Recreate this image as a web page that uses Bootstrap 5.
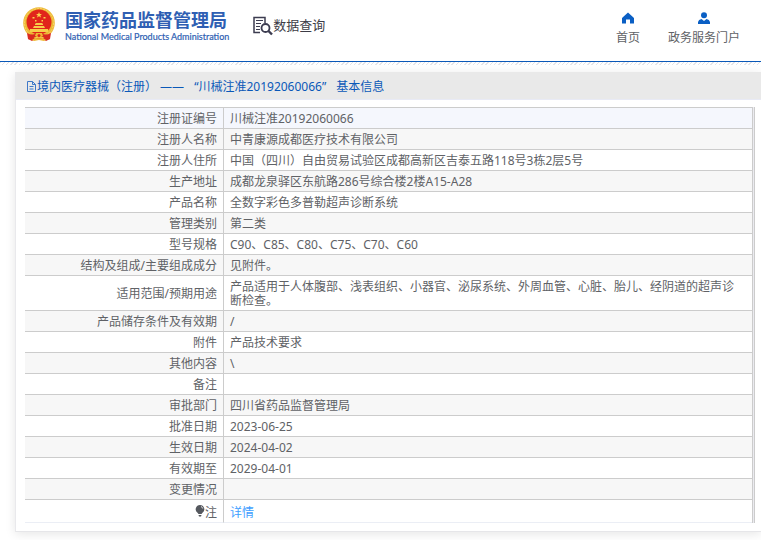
<!DOCTYPE html>
<html lang="zh-CN">
<head>
<meta charset="utf-8">
<meta name="viewport" content="width=device-width, initial-scale=1">
<title>国家药品监督管理局 数据查询</title>
<link href="https://cdn.jsdelivr.net/npm/bootstrap@5.3.0/dist/css/bootstrap.min.css" rel="stylesheet">
<style>
body{font-family:"Noto Sans","Noto Sans CJK SC",sans-serif;font-size:12px;line-height:14px;color:#606266;background:#fff}
a{text-decoration:none}
.site-head{height:61px;padding:7px 21px 0 23px}
.head-rule{height:4px;border-top:1px solid #0a58b8;background:repeating-linear-gradient(135deg,#e4e4e8 0 1px,#fff 1px 3px)}
.brand-name{font-size:18px;line-height:22px;font-weight:700;color:#2f5fb3}
.brand-en{font-family:Lato,"Liberation Sans",sans-serif;font-size:9px;line-height:12px;color:#2f5fb3;-webkit-text-stroke:.2px #2f5fb3}
.brand-text{margin-left:10px;padding-top:2px}
.query{margin:9px 0 0 24px;color:#3c3c46}
.query span{font-size:13px;line-height:18px}
.top-links{gap:28px;padding-top:5px}
.top-links a{color:#606266}
.top-links svg{margin-bottom:7px}
.info-panel{margin:7px 0 9px 15px;border-left:1px solid #e9e9ec;border-bottom:1px solid #e6e6e9;box-shadow:0 2px 10px rgba(0,0,0,.1)}
.info-title{height:28px;margin:0;padding:2px 0 0 10px;font-size:12px;line-height:26px;font-weight:400;color:#0a58b8;background:#e9e9e9;border-bottom:1px solid #e8eaf5}
.info-title span+span{margin-left:10px}
.table-frame{margin:7px 6px 8px 9px;background:#ebebf0;border-right:1px solid #ccc;padding-right:1px}
.info-table{width:100%;border-collapse:separate;border-spacing:0;border-top:1px solid #ccc;border-right:1px solid #ccc;background:#fff}
.info-table th,.info-table td{padding:4px 6px 2px;border-bottom:1px solid #ccc;vertical-align:middle}
.info-table th{width:199px;text-align:right;font-weight:400;border-right:1px solid #ccc}
.info-table tr:nth-child(even){background:#f7f7f7}
.info-table tr:first-child{background:#f5f7fd}
.info-table td{height:21px;padding-right:16px}
.info-table tr:last-child th,.info-table tr:last-child td{padding-top:5px;border-bottom-color:#ebeef5}
.info-table a{color:#409eff}
</style>
<script src="https://cdn.jsdelivr.net/npm/bootstrap@5.3.0/dist/js/bootstrap.bundle.min.js"></script>
</head>
<body>
<header>
<div class="site-head d-flex align-items-start">
<svg width="32" height="35" viewBox="0 0 32 35" aria-hidden="true">
<path d="M6 25 5 32l4 2 3-2 4 1 4-1 3 2 4-2-1-7Z" fill="#d92a20"/>
<circle cx="16" cy="16" r="15.8" fill="#edb936"/>
<circle cx="16" cy="16" r="14.5" fill="none" stroke="#f7d568" stroke-width="1" stroke-dasharray="2 1"/>
<circle cx="16" cy="15" r="12.500" fill="#e1251b"/>
<path d="m16 5 .8 2H19l-1.700 1.300.7 2.200-2-1.300-2 1.300.7-2.200L13 7h2.200Z" fill="#fbd34b"/>
<path d="M9.500 10h2v1.500h-2zM12 13h1.500v1.500H12zM18.500 13H20v1.500h-1.500zM20.500 10h2v1.500h-2z" fill="#fbd34b"/>
<path d="m12 17 1-1h6l1 1v1h-8Zm-1 2h10l1 2H10ZM7 22h18v3H7Z" fill="#f6cf4a"/>
<path d="M4 26q6 3 9 0h6q3 3 9 0l-1 6q-4 1-7-2h-8q-3 3-7 2Z" fill="#d92a20"/>
<path d="M13 26h6l1 3-4 2-4-2ZM9 33l3-2 4 1 4-1 3 2-2 1-5-1-5 1Z" fill="#efb832"/>
<circle cx="16" cy="28.500" r="1.500" fill="#e1251b"/>
</svg>
<div class="brand-text d-flex flex-column text-nowrap">
<span class="brand-name">国家药品监督管理局</span>
<span class="brand-en">National Medical Products Administration</span>
</div>
<div class="query d-flex text-nowrap">
<svg width="20" height="20" viewBox="0 0 20 20" fill="none" stroke="#3c3c50" aria-hidden="true">
<path d="M7 16.500H1V1.500h11V7" stroke-width="1.500"/>
<path d="M3 4.500h7M3 7.500h5M3 10.500h4M3 13.500h4" stroke-width="1"/>
<circle cx="12.500" cy="12" r="4" stroke-width="1.800"/>
<path d="m15.500 15 3.500 3.500" stroke-width="2.400"/>
</svg>
<span>数据查询</span>
</div>
<nav class="top-links d-flex ms-auto text-center text-nowrap">
<a href="#" class="d-flex flex-column align-items-center"><svg width="12" height="12" viewBox="0 0 12 12" aria-hidden="true"><path d="M6 .500 0 6v5.500h4V7.500h4v4h4V6Z" fill="#0a5fc4"/></svg>首页</a>
<a href="#" class="d-flex flex-column align-items-center"><svg width="12" height="12" viewBox="0 0 12 12" fill="#0a5fc4" aria-hidden="true"><circle cx="6" cy="3.200" r="3"/><path d="M0 12V10q.5-2.500 3.500-3L6 9l2.500-2q3 .5 3.500 3v2Z"/></svg>政务服务门户</a>
</nav>
</div>
<div class="head-rule"></div>
</header>
<main class="info-panel">
<h1 class="info-title d-flex align-items-center text-nowrap"><svg width="11" height="12" viewBox="0 0 11 12" fill="none" stroke="#3f78c8" aria-hidden="true"><path d="M1.500.5h5l3 3v7h-8Zm5 0v3h3M3.500 5.500h4M3.500 8h4"/></svg><span>境内医疗器械（注册） ——</span><span>“川械注准20192060066”</span><span>基本信息</span></h1>
<div class="table-frame">
<table class="info-table">
<tbody>
<tr><th scope="row">注册证编号</th><td>川械注准20192060066</td></tr>
<tr><th scope="row">注册人名称</th><td>中青康源成都医疗技术有限公司</td></tr>
<tr><th scope="row">注册人住所</th><td>中国（四川）自由贸易试验区成都高新区吉泰五路118号3栋2层5号</td></tr>
<tr><th scope="row">生产地址</th><td>成都龙泉驿区东航路286号综合楼2楼A15-A28</td></tr>
<tr><th scope="row">产品名称</th><td>全数字彩色多普勒超声诊断系统</td></tr>
<tr><th scope="row">管理类别</th><td>第二类</td></tr>
<tr><th scope="row">型号规格</th><td>C90、C85、C80、C75、C70、C60</td></tr>
<tr><th scope="row">结构及组成/主要组成成分</th><td>见附件。</td></tr>
<tr><th scope="row">适用范围/预期用途</th><td>产品适用于人体腹部、浅表组织、小器官、泌尿系统、外周血管、心脏、胎儿、经阴道的超声诊断检查。</td></tr>
<tr><th scope="row">产品储存条件及有效期</th><td>/</td></tr>
<tr><th scope="row">附件</th><td>产品技术要求</td></tr>
<tr><th scope="row">其他内容</th><td>\</td></tr>
<tr><th scope="row">备注</th><td></td></tr>
<tr><th scope="row">审批部门</th><td>四川省药品监督管理局</td></tr>
<tr><th scope="row">批准日期</th><td>2023-06-25</td></tr>
<tr><th scope="row">生效日期</th><td>2024-04-02</td></tr>
<tr><th scope="row">有效期至</th><td>2029-04-01</td></tr>
<tr><th scope="row">变更情况</th><td></td></tr>
<tr><th scope="row"><svg class="align-baseline" width="10" height="12" viewBox="0 0 10 12" aria-hidden="true"><path d="M5 0a4.300 4.300 0 0 1 2.500 7.800L6.500 9h-3l-1-1.200A4.300 4.300 0 0 1 5 0ZM3.500 10h3L6 11.500H4Z" fill="#55585e"/><path d="M6 1.500q1.500.5 1.700 2" fill="none" stroke="#fff" stroke-width=".8"/></svg>注</th><td><a href="#">详情</a></td></tr>
</tbody>
</table>
</div>
</main>
</body>
</html>
